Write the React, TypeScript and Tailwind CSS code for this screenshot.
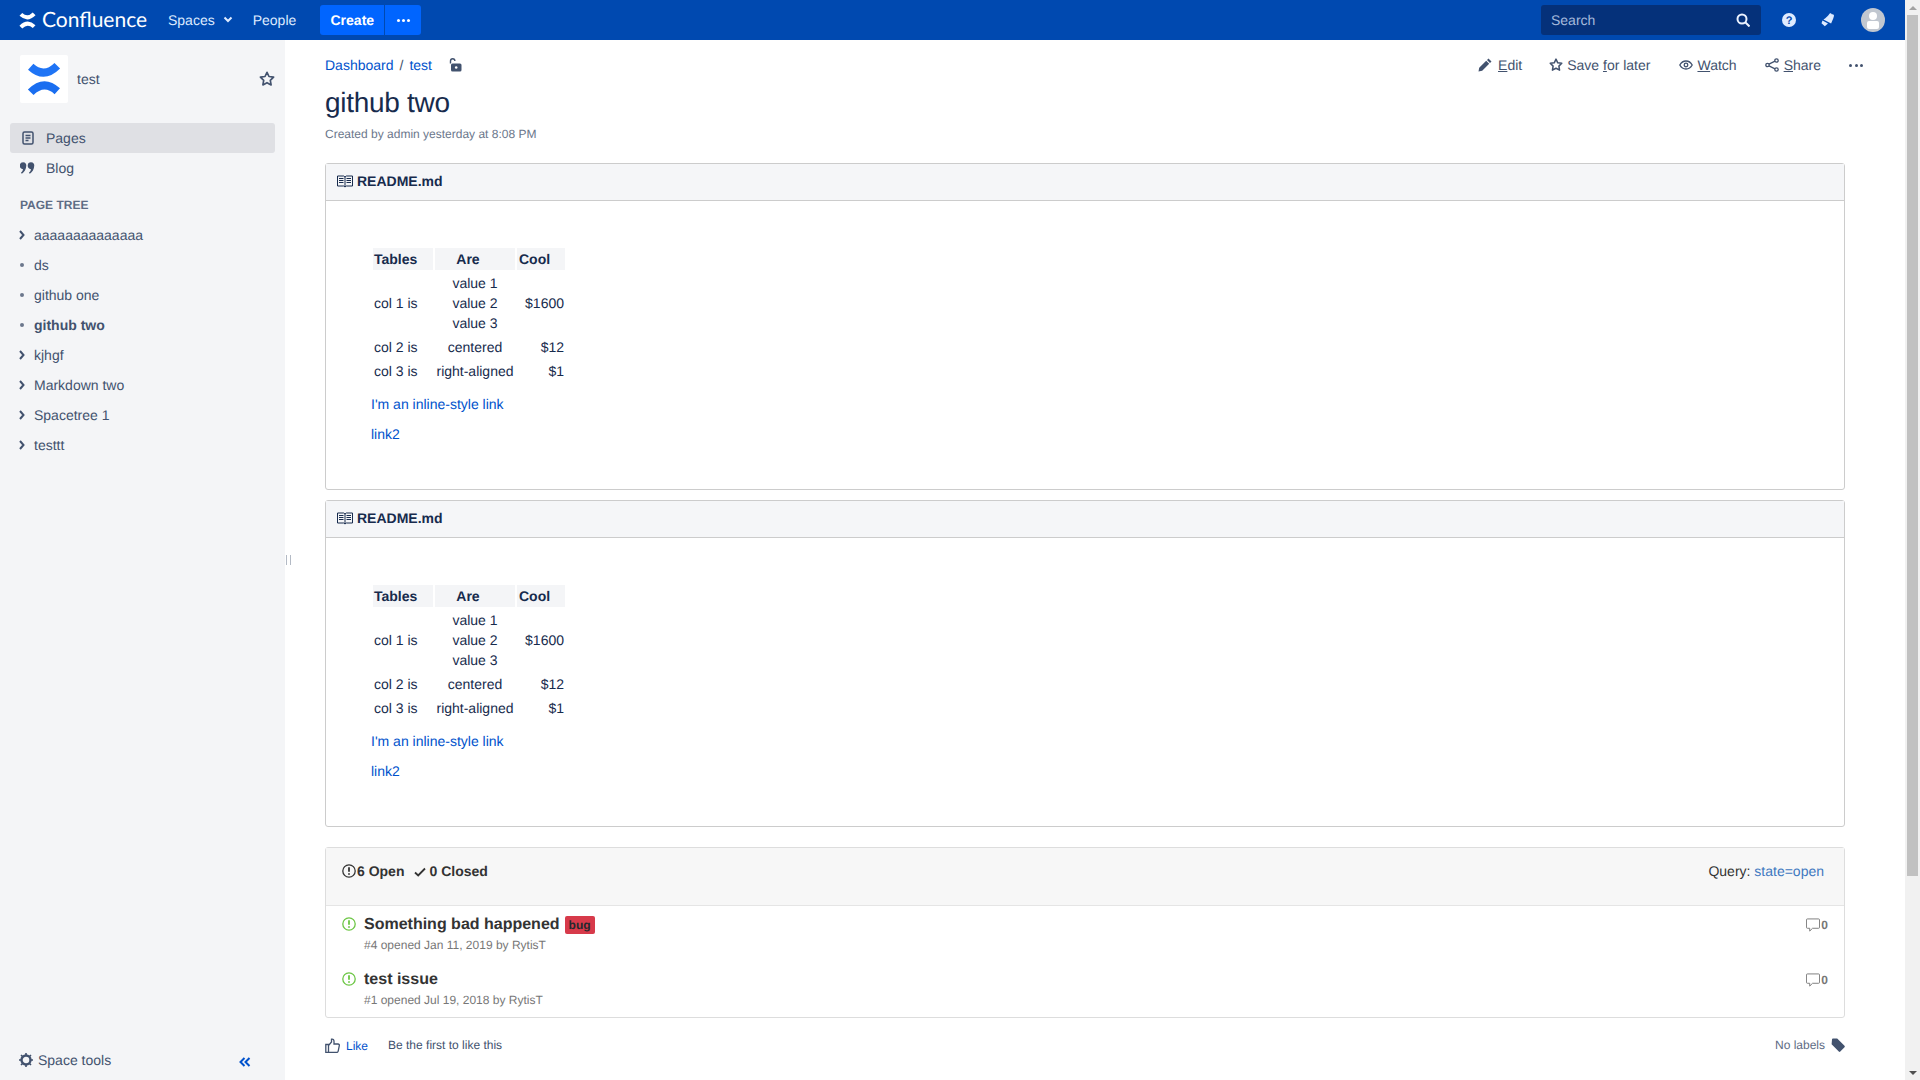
import { FC, ReactNode } from "react";

const ConfluenceMark: FC<{ className: string; color?: string; colorB?: string }> = ({ className, color = "#fff", colorB }) => (
  <svg viewBox="0 0 32 32" className={className} fill="none" strokeWidth="7.500">
    <path stroke={color} d="M3.500 4.500Q16 16 28.500 3.500" />
    <path stroke={colorB ?? color} d="M3.500 28.500Q16 16 28.500 27.500" />
  </svg>
);

const StarIcon: FC<{ className: string }> = ({ className }) => (
  <svg viewBox="0 0 16 16" className={className} fill="none" stroke="currentColor" strokeWidth="1.700" strokeLinejoin="round">
    <path d="M8 1.300l2 4.200 4.600.6-3.300 3.200.8 4.600L8 11.700l-4.100 2.200.8-4.600L1.400 6.100 6 5.500z" />
  </svg>
);

const Chevron: FC = () => (
  <svg viewBox="0 0 8 10" className="h-[10px] w-[8px] text-[#42526e]" fill="none" stroke="currentColor" strokeWidth="2">
    <path d="M2 1l3.500 4L2 9" />
  </svg>
);

const ReadmeIcon: FC = () => (
  <svg viewBox="0 0 16 13" className="h-[13px] w-[16px] text-[#172b4d]" fill="none" stroke="currentColor" strokeWidth="1">
    <path d="M.5 1h6.200L8 2l1.300-1h6.200v10H9.300L8 12l-1.300-1H.5zM8 2v10" />
    <path d="M2 3.500h4.500M2 5.500h4.500M2 7.500h4.500M9.500 3.500H14M9.500 5.500H14M9.500 7.500H14" />
  </svg>
);

const IssueIcon: FC<{ className: string }> = ({ className }) => (
  <svg viewBox="0 0 14 14" className={className} fill="none" stroke="currentColor" strokeWidth="1.300">
    <circle cx="7" cy="7" r="6.200" />
    <path d="M7 3.200v4.600M7 9.300v1.500" strokeWidth="1.800" />
  </svg>
);

const CommentIcon: FC = () => (
  <svg viewBox="0 0 15 14" className="h-[14px] w-[14px] text-[#777]" fill="none" stroke="currentColor" strokeWidth="1">
    <path d="M1.500.5h12a1 1 0 0 1 1 1v8a1 1 0 0 1-1 1H7L4 13.500v-3H1.500a1 1 0 0 1-1-1v-8a1 1 0 0 1 1-1z" />
  </svg>
);

const TreeRow: FC<{ label: string; bullet?: boolean; bold?: boolean }> = ({ label, bullet, bold }) => (
  <div className="flex h-[30px] items-center pl-[18px] text-[14px] text-[#42526e]">
    <span className="flex w-[16px] items-center">
      {bullet ? <span className="ml-[2px] h-[4px] w-[4px] rounded-full bg-[#6b778c]" /> : <Chevron />}
    </span>
    <span className={bold ? "font-bold" : ""}>{label}</span>
  </div>
);

const ActionButton: FC<{ icon: ReactNode; children: ReactNode }> = ({ icon, children }) => (
  <a className="flex items-center gap-[5px] text-[14px] text-[#42526e]">
    {icon}
    <span>{children}</span>
  </a>
);

const MarkdownTable: FC = () => (
  <table className="border-separate border-spacing-[2px] text-[14px] leading-[20px] text-[#172b4d]">
    <thead>
      <tr className="bg-[#f4f5f7] font-bold">
        <th className="w-[60px] px-[1px] py-[1px] text-left">Tables</th>
        <th className="w-[80px] py-[1px] pl-[1px] pr-[15px] text-center">Are</th>
        <th className="w-[48px] px-[2px] py-[1px] text-left">Cool</th>
      </tr>
    </thead>
    <tbody>
      <tr>
        <td className="p-[1px]">col 1 is</td>
        <td className="p-[1px] text-center">
          value 1
          <br />
          value 2
          <br />
          value 3
        </td>
        <td className="p-[1px] text-right">$1600</td>
      </tr>
      <tr>
        <td className="p-[1px]">col 2 is</td>
        <td className="p-[1px] text-center">centered</td>
        <td className="p-[1px] text-right">$12</td>
      </tr>
      <tr>
        <td className="p-[1px]">col 3 is</td>
        <td className="p-[1px] text-center">right-aligned</td>
        <td className="p-[1px] text-right">$1</td>
      </tr>
    </tbody>
  </table>
);

const ReadmePanel: FC = () => (
  <div className="h-[327px] rounded-[3px] border border-[#cccccc]">
    <div className="flex h-[37px] items-center gap-[4px] border-b border-[#cccccc] bg-[#f5f6f8] pb-[2px] pl-[11px] text-[14px] font-bold text-[#172b4d]">
      <ReadmeIcon />
      README.md
    </div>
    <div className="pl-[45px] pt-[45px]">
      <MarkdownTable />
      <p className="mt-[10px] text-[14px] leading-[20px] text-[#0052cc]">I'm an inline-style link</p>
      <p className="mt-[10px] text-[14px] leading-[20px] text-[#0052cc]">link2</p>
    </div>
  </div>
);

const IssueRow: FC<{ title: string; meta: string; badge?: boolean }> = ({ title, meta, badge }) => (
  <div className="flex h-[55px] pl-[16px] pr-[16px] pt-[7px]">
    <IssueIcon className="mt-[4px] h-[14px] w-[14px] text-[#6cc644]" />
    <div className="ml-[8px] flex-1">
      <div className="flex h-[24px] items-center text-[16px] font-bold text-[#333]">
        {title}
        {badge && (
          <span className="ml-[5px] flex h-[18px] w-[30px] items-center justify-center rounded-[2px] bg-[#d73a4a] text-[12px] text-[#24292e]">
            bug
          </span>
        )}
      </div>
      <div className="-mt-[1px] text-[12px] leading-[18px] text-[#777]">{meta}</div>
    </div>
    <div className="mt-[5px] flex h-[14px] items-center gap-[1px] text-[12px] font-bold text-[#777]">
      <CommentIcon />0
    </div>
  </div>
);

export default function App() {
  return (
    <div className="flex h-screen w-screen overflow-hidden font-['Liberation_Sans',Arial,sans-serif] [text-rendering:geometricPrecision]">
      <div className="flex min-w-0 flex-1 flex-col">
        {/* top nav */}
        <header className="flex h-[40px] shrink-0 items-center bg-[#0049b0] text-[14px] text-[#deebff]">
          <div className="ml-[19px] flex w-[129px] items-center gap-[6px]">
            <ConfluenceMark className="h-[17px] w-[17px]" />
            <span className="font-['Lato',sans-serif] text-[21px] leading-[24px] text-white">Confluence</span>
          </div>
          <div className="ml-[20px] flex items-center gap-[8px]">
            Spaces
            <svg viewBox="0 0 10 8" className="h-[8px] w-[10px]" fill="none" stroke="currentColor" strokeWidth="2">
              <path d="M1.500 1.500L5 5l3.500-3.500" />
            </svg>
          </div>
          <span className="ml-[20px]">People</span>
          <div className="ml-[24px] flex h-[30px] overflow-hidden rounded-[3px]">
            <span className="flex w-[64px] items-center justify-center bg-[#0065ff] font-bold text-white">Create</span>
            <span className="ml-[1px] flex w-[36px] items-center justify-center gap-[2px] bg-[#0065ff]">
              <span className="h-[3px] w-[3px] rounded-full bg-white" />
              <span className="h-[3px] w-[3px] rounded-full bg-white" />
              <span className="h-[3px] w-[3px] rounded-full bg-white" />
            </span>
          </div>
          <div className="ml-auto flex h-[30px] w-[220px] items-center justify-between rounded-[3px] bg-[#05317a] pl-[10px] pr-[11px] text-[#a5badc]">
            Search
            <svg viewBox="0 0 14 14" className="h-[14px] w-[14px] text-[#ebf2ff]" fill="none" stroke="currentColor" strokeWidth="2">
              <circle cx="6" cy="6" r="4.500" />
              <path d="M9.500 9.500l4 4" />
            </svg>
          </div>
          <svg viewBox="0 0 14 14" className="ml-[21px] h-[14px] w-[14px]">
            <circle cx="7" cy="7" r="7" fill="#deebff" />
            <text x="7" y="11" textAnchor="middle" fontSize="11" fontWeight="bold" fill="#0049b0" fontFamily="Liberation Sans">?</text>
          </svg>
          <svg viewBox="0 0 14 14" className="ml-[25px] h-[14px] w-[14px] text-[#deebff]" fill="currentColor">
            <path d="M8.500.8c1-.8 1.800-.5 2.200.5 1.700-.3 2.600.5 2.200 2-.8 3-2 5.500-2.800 7.200L2.400 6.600C4.500 5.500 7 3 8.500.8zM1.500 7.500l5.500 3-3.200 2.700-3.300-3z" />
          </svg>
          <div className="relative ml-[26px] mr-[20px] h-[24px] w-[24px] overflow-hidden rounded-full bg-[#c1c7d0]">
            <span className="absolute left-[8px] top-[4px] h-[8px] w-[8px] rounded-full bg-white" />
            <span className="absolute left-[6px] top-[13px] h-[8px] w-[12px] rounded-[2px] bg-white" />
          </div>
        </header>

        <div className="flex min-h-0 flex-1">
          {/* sidebar */}
          <aside className="flex w-[285px] shrink-0 flex-col bg-[#f4f5f7]">
            <div className="mt-[15px] flex h-[48px] items-center pl-[20px] pr-[10px]">
              <div className="flex h-[48px] w-[48px] items-center justify-center rounded-[2px] bg-white">
                <ConfluenceMark className="h-[34px] w-[34px]" color="#1f74f5" colorB="#1a6ef0" />
              </div>
              <span className="ml-[9px] flex-1 text-[14px] text-[#42526e]">test</span>
              <StarIcon className="h-[16px] w-[16px] text-[#42526e]" />
            </div>
            <nav className="mx-[10px] mt-[20px] text-[14px] text-[#42526e]">
              <div className="flex h-[30px] items-center rounded-[3px] bg-[#dfe0e4] pl-[12px]">
                <svg viewBox="0 0 12 14" className="h-[14px] w-[12px]" fill="none" stroke="currentColor" strokeWidth="1.500">
                  <rect x="1" y="1" width="10" height="12" rx="1.500" />
                  <path d="M3.500 4.500h5M3.500 7h5M3.500 9.500h3" />
                </svg>
                <span className="ml-[12px]">Pages</span>
              </div>
              <div className="flex h-[30px] items-center pl-[10px]">
                <svg viewBox="0 0 16 14" className="h-[14px] w-[15px]" fill="currentColor">
                  <path d="M3.500 1a3 3 0 0 1 3.200 3.200C6.700 8 4.500 11.500 2 13l-1-1c1.200-1 2-2.400 2.200-3.800A3.200 3.200 0 0 1 3.500 1zM12 1a3 3 0 0 1 3.200 3.200C15.200 8 13 11.500 10.500 13l-1-1c1.200-1 2-2.400 2.200-3.800A3.200 3.200 0 0 1 12 1z" />
                </svg>
                <span className="ml-[11px]">Blog</span>
              </div>
            </nav>
            <div className="mt-[15px] pl-[20px] text-[12px] font-bold leading-[14px] text-[#5e6c84]">PAGE TREE</div>
            <div className="mt-[8px]">
              <TreeRow label="aaaaaaaaaaaaaa" />
              <TreeRow label="ds" bullet />
              <TreeRow label="github one" bullet />
              <TreeRow label="github two" bullet bold />
              <TreeRow label="kjhgf" />
              <TreeRow label="Markdown two" />
              <TreeRow label="Spacetree 1" />
              <TreeRow label="testtt" />
            </div>
            <div className="mb-[10px] mt-auto flex h-[20px] items-center pl-[19px] pr-[34px] text-[14px] text-[#42526e]">
              <svg viewBox="0 0 14 14" className="h-[14px] w-[14px]" fill="none" stroke="currentColor" strokeWidth="2.400">
                <circle cx="7" cy="7" r="4.500" />
                <path d="M7 0v2.500M7 11.500V14M0 7h2.500M11.500 7H14M2 2l1.800 1.800M10.200 10.200L12 12M2 12l1.800-1.800M10.200 3.800L12 2" strokeWidth="1.600" />
              </svg>
              <span className="ml-[5px] flex-1">Space tools</span>
              <svg viewBox="0 0 12 10" className="mt-[3px] h-[10px] w-[12px] text-[#0052cc]" fill="none" stroke="currentColor" strokeWidth="2">
                <path d="M5.500 1L1.500 5l4 4M10.500 1l-4 4 4 4" />
              </svg>
            </div>
          </aside>

          {/* page content */}
          <main className="relative min-w-0 flex-1 pl-[40px] pr-[60px] text-[#172b4d]">
            <span className="absolute left-[1px] top-[515px] h-[10px] w-[5px] border-x border-[#b3bac5]" />
            <div className="mt-[15px] flex h-[20px] items-center text-[14px]">
              <a className="text-[#0052cc]">Dashboard</a>
              <span className="mx-[6px] text-[#42526e]">/</span>
              <a className="text-[#0052cc]">test</a>
              <svg viewBox="0 0 13 14" className="ml-[17px] h-[14px] w-[13px] text-[#42526e]">
                <path d="M1.500 5.500V3a2.200 2.200 0 0 1 4.400 0" fill="none" stroke="currentColor" strokeWidth="1.400" />
                <rect x="2" y="5.500" width="10.500" height="8" rx="1.500" fill="currentColor" />
                <circle cx="7.200" cy="9.500" r="1.300" fill="#fff" />
              </svg>
              <div className="-mr-[18px] ml-auto flex items-center">
                <ActionButton
                  icon={
                    <svg viewBox="0 0 14 14" className="-ml-[1px] mr-[1px] h-[14px] w-[14px]" fill="currentColor">
                      <path d="M10.500.5l3 3-1.500 1.500-3-3zM8.200 2.800l3 3-7 7-3.700.700.700-3.700z" />
                    </svg>
                  }
                >
                  <u>E</u>dit
                </ActionButton>
                <span className="w-[27px]" />
                <ActionButton icon={<StarIcon className="-mr-[1px] h-[14px] w-[14px]" />}>
                  Save <u>f</u>or later
                </ActionButton>
                <span className="w-[29px]" />
                <ActionButton
                  icon={
                    <svg viewBox="0 0 14 12" className="-mr-[1px] h-[12px] w-[14px]" fill="none" stroke="currentColor" strokeWidth="1.300">
                      <path d="M.8 6C2.300 3.300 4.500 2 7 2s4.700 1.300 6.200 4C11.700 8.700 9.500 10 7 10S2.300 8.700.8 6z" />
                      <circle cx="7" cy="6" r="1.800" />
                    </svg>
                  }
                >
                  <u>W</u>atch
                </ActionButton>
                <span className="w-[28px]" />
                <ActionButton
                  icon={
                    <svg viewBox="0 0 14 14" className="h-[14px] w-[14px]" fill="none" stroke="currentColor" strokeWidth="1.300">
                      <circle cx="2.500" cy="7" r="1.700" />
                      <circle cx="11.500" cy="2.500" r="1.700" />
                      <circle cx="11.500" cy="11.500" r="1.700" />
                      <path d="M4 6.200l6-3M4 7.800l6 3" />
                    </svg>
                  }
                >
                  <u>S</u>hare
                </ActionButton>
                <span className="ml-[28px] flex w-[14px] justify-between">
                  <span className="h-[3px] w-[3px] rounded-full bg-[#42526e]" />
                  <span className="h-[3px] w-[3px] rounded-full bg-[#42526e]" />
                  <span className="h-[3px] w-[3px] rounded-full bg-[#42526e]" />
                </span>
              </div>
            </div>
            <h1 className="mt-[12px] text-[28px] leading-[32px] tracking-[-0.01em] text-[#172b4d]">github two</h1>
            <p className="mt-[6px] text-[12px] leading-[18px] text-[#6b778c]">Created by admin yesterday at 8:08 PM</p>

            <div className="mt-[20px] flex flex-col gap-[10px]">
              <ReadmePanel />
              <ReadmePanel />
            </div>

            {/* github issues */}
            <div className="mt-[20px] h-[171px] rounded-[3px] border border-[#dddddd] text-[14px]">
              <div className="flex h-[58px] justify-between border-b border-[#e5e5e5] bg-[#f7f7f7] pl-[16px] pr-[20px] pt-[13px] leading-[20px] text-[#333]">
                <div className="flex items-start font-bold">
                  <IssueIcon className="mt-[3px] h-[14px] w-[14px] text-[#333]" />
                  <span className="ml-[1px]">6 Open</span>
                  <svg viewBox="0 0 12 10" className="ml-[10px] mt-[6px] h-[10px] w-[12px]" fill="none" stroke="currentColor" strokeWidth="1.800">
                    <path d="M1 5.500L4.200 8.500 11 1.500" />
                  </svg>
                  <span className="ml-[3px]">0 Closed</span>
                </div>
                <div>
                  Query: <a className="text-[#4078c0]">state=open</a>
                </div>
              </div>
              <IssueRow title="Something bad happened" meta="#4 opened Jan 11, 2019 by RytisT" badge />
              <IssueRow title="test issue" meta="#1 opened Jul 19, 2018 by RytisT" />
            </div>

            <div className="mt-[17px] flex h-[20px] items-center text-[12px] text-[#42526e]">
              <svg viewBox="0 0 15 15" className="h-[15px] w-[15px]" fill="none" stroke="currentColor" strokeWidth="1.300">
                <path d="M.8 6.500h2.700v8H.8zM3.500 7.500L6.500 4V1.200c1.500-.5 2.500.6 2.500 2v2.800h4c1 0 1.500.8 1.300 1.600l-1.100 5.500c-.2.800-.8 1.400-1.700 1.400H5c-.7 0-1.500-.4-1.500-1" />
              </svg>
              <a className="ml-[6px] mt-[1px] text-[#0052cc]">Like</a>
              <span className="ml-[20px]">Be the first to like this</span>
              <span className="ml-auto text-[#5e6c84]">No labels</span>
              <svg viewBox="0 0 14 14" className="ml-[6px] h-[14px] w-[14px] text-[#42526e]" fill="currentColor">
                <path d="M1 1.500A1 1 0 0 1 2 .5h4.200l7.300 7.300c.5.500.5 1 0 1.500l-4.200 4.200c-.5.500-1 .5-1.500 0L.6 6.200z" />
              </svg>
            </div>
          </main>
        </div>
      </div>

      {/* scrollbar */}
      <div className="flex w-[15px] shrink-0 flex-col bg-[#f1f1f1]">
        <div className="flex h-[15px] items-center justify-center">
          <span className="border-x-[4px] border-b-[4px] border-x-transparent border-b-[#a3a3a3]" />
        </div>
        <div className="mx-[2px] h-[861px] bg-[#c1c1c1]" />
        <div className="mt-auto flex h-[15px] items-center justify-center">
          <span className="border-x-[4px] border-t-[4px] border-x-transparent border-t-[#505050]" />
        </div>
      </div>
    </div>
  );
}
